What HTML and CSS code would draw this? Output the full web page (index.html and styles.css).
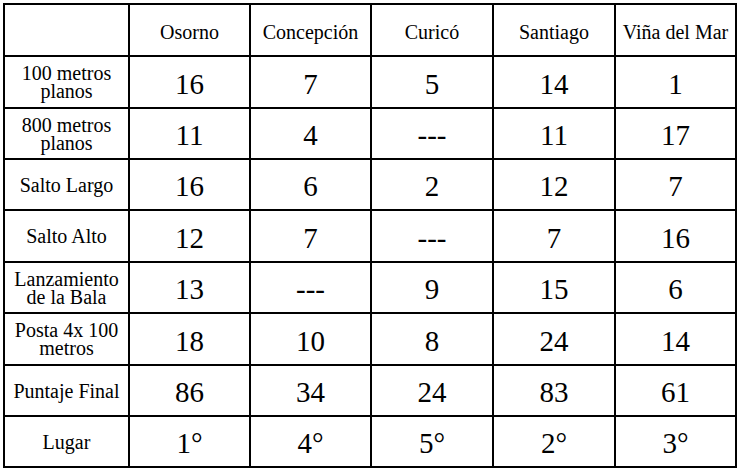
FILE: index.html
```html
<!DOCTYPE html>
<html lang="es">
<head>
<meta charset="utf-8">
<title>Resultados</title>
<link rel="stylesheet" href="styles.css">
</head>
<body>
<table class="results">
  <colgroup>
    <col class="c0"><col class="c1"><col class="c2"><col class="c3"><col class="c4"><col class="c5">
  </colgroup>
  <tr class="head r52">
    <th></th><th>Osorno</th><th>Concepción</th><th>Curicó</th><th>Santiago</th><th>Viña del Mar</th>
  </tr>
  <tr class="r52">
    <th class="label">100 metros<br>planos</th><td>16</td><td>7</td><td>5</td><td>14</td><td>1</td>
  </tr>
  <tr class="r51">
    <th class="label">800 metros<br>planos</th><td>11</td><td>4</td><td class="dash">---</td><td>11</td><td>17</td>
  </tr>
  <tr class="r51">
    <th class="label">Salto Largo</th><td>16</td><td>6</td><td>2</td><td>12</td><td>7</td>
  </tr>
  <tr class="r52">
    <th class="label">Salto Alto</th><td>12</td><td>7</td><td class="dash">---</td><td>7</td><td>16</td>
  </tr>
  <tr class="r51">
    <th class="label">Lanzamiento<br>de la Bala</th><td>13</td><td class="dash">---</td><td>9</td><td>15</td><td>6</td>
  </tr>
  <tr class="r52">
    <th class="label">Posta 4x 100<br>metros</th><td>18</td><td>10</td><td>8</td><td>24</td><td>14</td>
  </tr>
  <tr class="r51">
    <th class="label">Puntaje Final</th><td>86</td><td>34</td><td>24</td><td>83</td><td>61</td>
  </tr>
  <tr class="r51">
    <th class="label">Lugar</th><td>1°</td><td>4°</td><td>5°</td><td>2°</td><td>3°</td>
  </tr>
</table>
</body>
</html>
```

FILE: styles.css
```css
html, body {
  margin: 0;
  padding: 0;
  background: #ffffff;
}

body {
  padding: 3px 0 0 3px;
}

.results {
  border-collapse: collapse;
  table-layout: fixed;
  width: 732px;
  color: #000;
}

.c0 { width: 125px; }
.c1 { width: 121px; }
.c2 { width: 121px; }
.c3 { width: 122px; }
.c4 { width: 122px; }
.c5 { width: 121px; }

.results th,
.results td {
  font-family: "Liberation Serif", "Times New Roman", Times, serif;
  border: 2px solid #000;
  padding: 0;
  text-align: center;
  vertical-align: middle;
}

.results th {
  font-weight: normal;
  font-size: 20px;
  line-height: 18px;
}

.head th {
  padding-top: 3px;
}

.results td {
  font-size: 29px;
  line-height: 33px;
  padding-top: 4px;
}

.r52 { height: 52px; }
.r51 { height: 51px; }
```
